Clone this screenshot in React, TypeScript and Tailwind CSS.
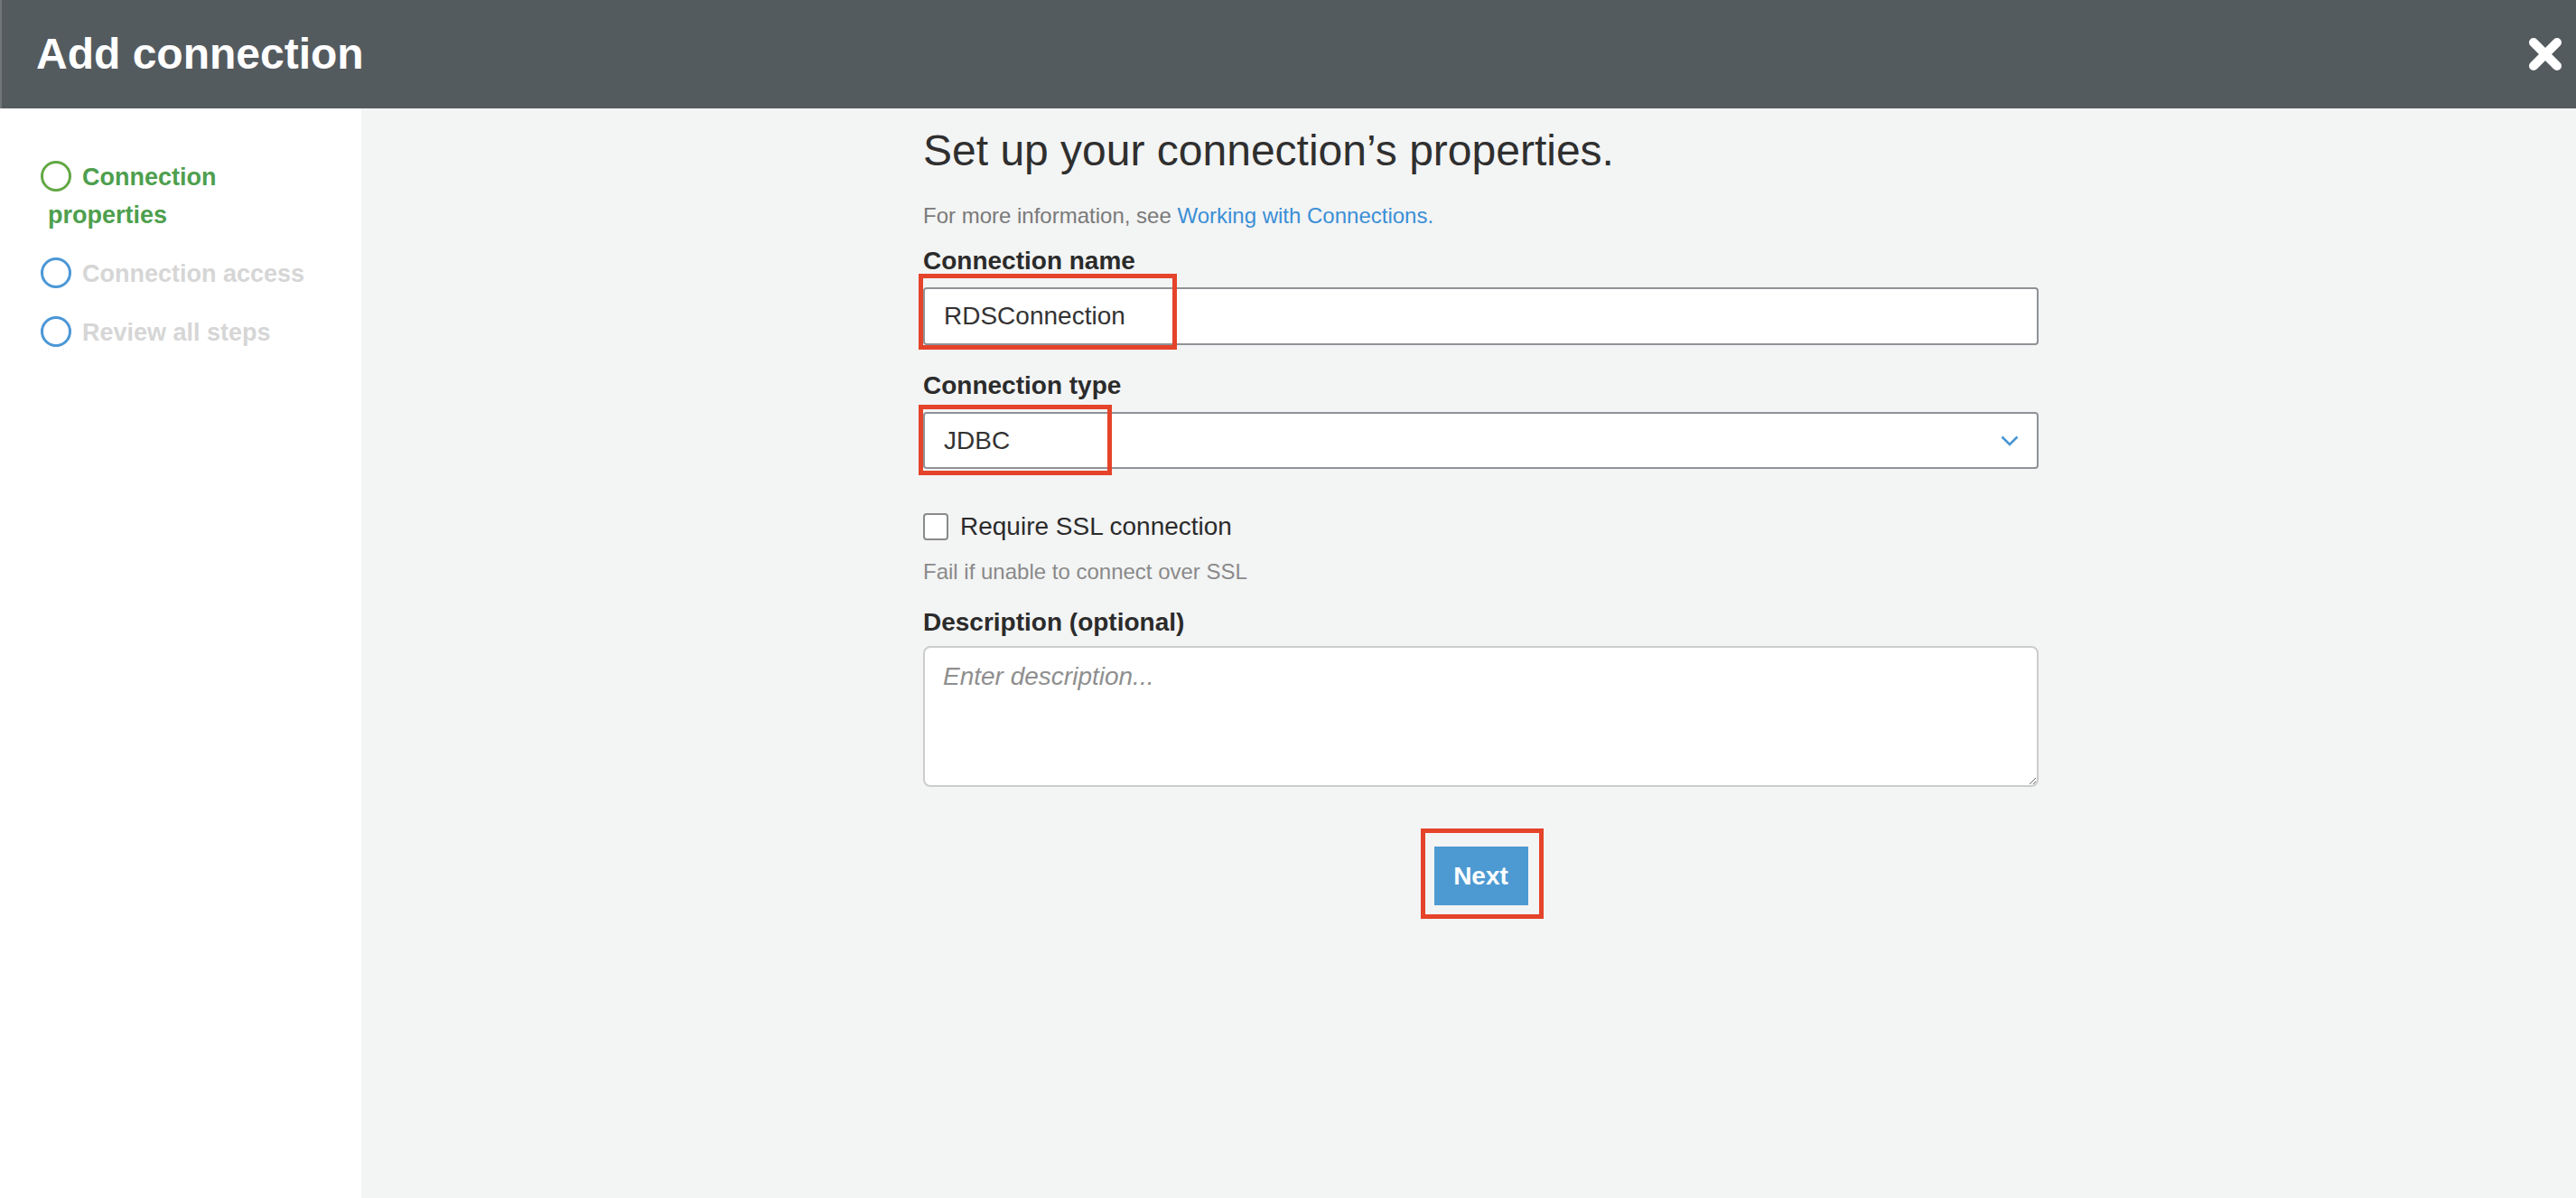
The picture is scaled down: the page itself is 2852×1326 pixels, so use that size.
import React from 'react';

type Step = { label: string; active?: boolean };

const steps: Step[] = [
  { label: 'Connection properties', active: true },
  { label: 'Connection access' },
  { label: 'Review all steps' },
];

// thick rounded X used in the modal header
function CloseIcon() {
  return (
    <svg width="38" height="38" viewBox="0 0 38 38" aria-hidden="true">
      <path d="M6 6 L32 32 M32 6 L6 32" stroke="#ffffff" strokeWidth="10" strokeLinecap="round" />
    </svg>
  );
}

function Chevron() {
  return (
    <svg width="20" height="12" viewBox="0 0 20 12" aria-hidden="true">
      <path d="M1.5 1.5 L10 10 L18.5 1.5" fill="none" stroke="#4a95d3" strokeWidth="2.6" />
    </svg>
  );
}

function Highlight({ className }: { className: string }) {
  return <div className={`pointer-events-none absolute border-[5px] border-[#e5432a] ${className}`} />;
}

export default function App() {
  return (
    <div className="flex h-[1326px] w-[2852px] flex-col overflow-hidden font-['Liberation_Sans',Arial,sans-serif]">
      {/* Header */}
      <div className="flex h-[120px] shrink-0 items-center justify-between border-l-2 border-[#6f7579] bg-[#545b5f] pl-[38px] pr-[15px]">
        <h1 className="text-[48px] font-bold leading-none text-white">Add connection</h1>
        <CloseIcon />
      </div>

      <div className="flex flex-1">
        {/* Steps sidebar */}
        <aside className="w-[400px] shrink-0 bg-white pl-[53px] pr-[40px] pt-[55px]">
          <ul className="flex flex-col gap-[23px]">
            {steps.map((s) => (
              <li
                key={s.label}
                className={`text-[27px] font-bold leading-[42px] ${s.active ? 'text-[#4e9f4e]' : 'text-[#d6d6d6]'}`}
              >
                <span
                  className={`-ml-[8px] mr-[12px] mt-[3px] inline-block h-[34px] w-[34px] rounded-full border-[3px] align-top ${
                    s.active ? 'border-[#62a845]' : 'border-[#4a97d6]'
                  }`}
                />
                {s.label}
              </li>
            ))}
          </ul>
        </aside>

        {/* Form */}
        <main className="flex-1 bg-[#f3f4f4] pl-[622px] pt-[19px]">
          <div className="flex w-[1235px] flex-col">
            <h2 className="text-[48px] font-normal leading-[56px] text-[#2f2f2f]">
              Set up your connection’s properties.
            </h2>
            <p className="mt-[28px] text-[24px] leading-[32px] text-[#7a7a7a]">
              For more information, see <span className="text-[#3b8fd6]">Working with Connections.</span>
            </p>

            <label className="mt-[17px] text-[28px] font-bold leading-[34px] text-[#2b2b2b]">Connection name</label>
            <div className="relative mt-[12px]">
              <div className="flex h-[64px] items-center rounded-[4px] border-2 border-[#8f9297] bg-white px-[21px] text-[28px] text-[#333333]">
                RDSConnection
              </div>
              <Highlight className="-left-[5px] -top-[15px] h-[84px] w-[286px]" />
            </div>

            <label className="mt-[28px] text-[28px] font-bold leading-[34px] text-[#2b2b2b]">Connection type</label>
            <div className="relative mt-[12px]">
              <div className="flex h-[63px] items-center justify-between rounded-[4px] border-2 border-[#8f9297] bg-white pl-[21px] pr-[20px] text-[28px] text-[#333333]">
                <span>JDBC</span>
                <Chevron />
              </div>
              <Highlight className="-left-[5px] -top-[8px] h-[78px] w-[214px]" />
            </div>

            <div className="mt-[47px] flex items-center gap-[13px]">
              <span className="h-[30px] w-[28px] rounded-[4px] border-2 border-[#8a8a8a] bg-white" />
              <span className="text-[28px] leading-[34px] text-[#2b2b2b]">Require SSL connection</span>
            </div>
            <p className="mt-[17px] text-[24px] leading-[32px] text-[#8a8a8a]">Fail if unable to connect over SSL</p>

            <label className="mt-[23px] text-[28px] font-bold leading-[34px] text-[#2b2b2b]">Description (optional)</label>
            <textarea
              placeholder="Enter description..."
              className="mt-[9px] h-[156px] rounded-[8px] border-2 border-[#cccccc] bg-white px-[20px] pt-[15px] text-[28px] leading-[34px] text-[#333333] outline-none placeholder:italic placeholder:text-[#8f8f8f]"
            />

            <div className="mt-[66px] flex justify-center">
              <div className="relative">
                <button className="h-[65px] w-[104px] bg-[#4d9ad3] text-[28px] font-bold text-white">Next</button>
                <Highlight className="-left-[15px] -top-[20px] h-[100px] w-[136px]" />
              </div>
            </div>
          </div>
        </main>
      </div>
    </div>
  );
}
